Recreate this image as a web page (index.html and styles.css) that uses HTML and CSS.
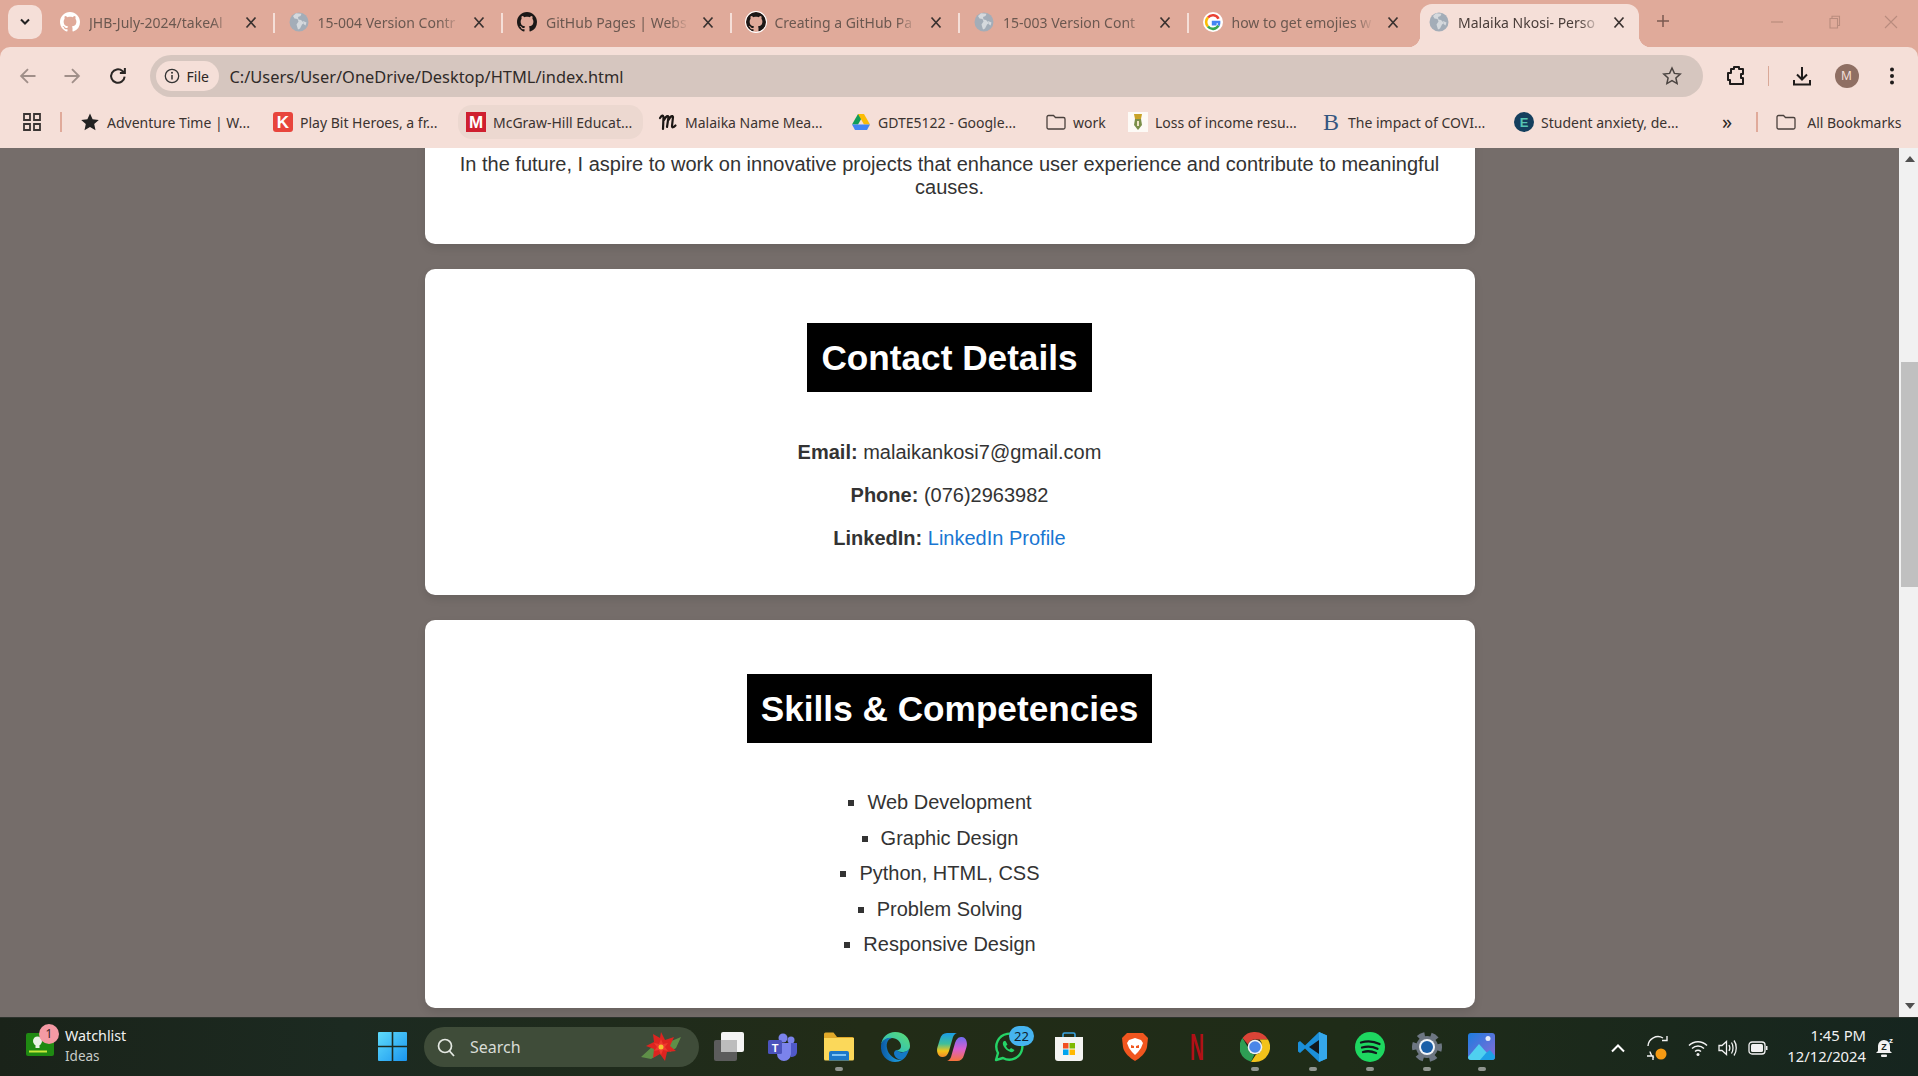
FILE: index.html
```html
<!DOCTYPE html>
<html lang="en">
<head>
    <meta charset="UTF-8">
    <title>Malaika Nkosi- Personal Portfolio</title>
    <link rel="stylesheet" href="styles.css">
</head>
<body>
    <svg class="defs" width="0" height="0">
        <symbol id="github" viewBox="0 0 16 16">
            <path fill="currentColor" d="M8 0C3.58 0 0 3.58 0 8c0 3.54 2.29 6.53 5.47 7.59.4.07.55-.17.55-.38 0-.19-.01-.82-.01-1.49-2.01.37-2.53-.49-2.69-.94-.09-.23-.48-.94-.82-1.13-.28-.15-.68-.52-.01-.53.63-.01 1.08.58 1.23.82.72 1.21 1.87.87 2.33.66.07-.52.28-.87.51-1.07-1.78-.2-3.64-.89-3.64-3.95 0-.87.31-1.59.82-2.15-.08-.2-.36-1.02.08-2.12 0 0 .67-.21 2.2.82.64-.18 1.32-.27 2-.27.68 0 1.36.09 2 .27 1.53-1.04 2.2-.82 2.2-.82.44 1.1.16 1.92.08 2.12.51.56.82 1.27.82 2.15 0 3.07-1.87 3.75-3.65 3.95.29.25.54.73.54 1.48 0 1.07-.01 1.93-.01 2.2 0 .21.15.46.55.38A8.013 8.013 0 0016 8c0-4.42-3.58-8-8-8z"/>
        </symbol>
        <symbol id="globe" viewBox="0 0 20 20">
            <circle cx="10" cy="10" r="9.5" fill="#a3adb8"/>
            <path fill="#d5d9dd" d="M7 1.2 4 4l1.5 2.5 3 .5 1 2.5-2 3 1.5 5 2-1 2-4 2-1.5-3-3-2.5-.5L9 5l2.5-1 1-2.2zM14 9l3.5 1.5-1 3-2-1.5z"/>
        </symbol>
        <symbol id="close" viewBox="0 0 12 12">
            <path d="M1.5 1 10.5 11M10.5 1 1.5 11" stroke="currentColor" stroke-width="1.7" fill="none"/>
        </symbol>
        <symbol id="folder" viewBox="0 0 20 16">
            <path d="M1 3a1.500 1.500 0 0 1 1.500-1.500h5L9.500 3.500h8A1.500 1.500 0 0 1 19 5v8.500a1.500 1.500 0 0 1-1.500 1.500h-15A1.500 1.500 0 0 1 1 13.500z" fill="none" stroke="#4a403c" stroke-width="1.300"/>
        </symbol>
    </svg>

    <header class="chrome">
        <div class="tabstrip">
            <button class="tab-menu">
                <svg width="12" height="8" viewBox="0 0 12 8"><path d="M2 1.500 6 5.500 10 1.500" fill="none" stroke="#222" stroke-width="2"/></svg>
            </button>
            <div class="tab sep">
                <svg class="fav fav-white"><use href="#github"/></svg>
                <span class="tab-title">JHB-July-2024/takeAl</span>
                <svg class="tab-close"><use href="#close"/></svg>
            </div>
            <div class="tab sep">
                <svg class="fav"><use href="#globe"/></svg>
                <span class="tab-title">15-004 Version Contr</span>
                <svg class="tab-close"><use href="#close"/></svg>
            </div>
            <div class="tab sep">
                <svg class="fav fav-dark"><use href="#github"/></svg>
                <span class="tab-title">GitHub Pages | Webs</span>
                <svg class="tab-close"><use href="#close"/></svg>
            </div>
            <div class="tab sep">
                <svg class="fav fav-dark fav-ring"><use href="#github"/></svg>
                <span class="tab-title">Creating a GitHub Pa</span>
                <svg class="tab-close"><use href="#close"/></svg>
            </div>
            <div class="tab sep">
                <svg class="fav"><use href="#globe"/></svg>
                <span class="tab-title">15-003 Version Cont</span>
                <svg class="tab-close"><use href="#close"/></svg>
            </div>
            <div class="tab">
                <svg class="fav" viewBox="0 0 20 20">
                    <circle cx="10" cy="10" r="10" fill="#fff"/>
                    <path d="M15.500 6.800A6.300 6.300 0 0 0 5 5.500" fill="none" stroke="#ea4335" stroke-width="2.600"/>
                    <path d="M5 5.500a6.300 6.300 0 0 0 0 9" fill="none" stroke="#fbbc05" stroke-width="2.600"/>
                    <path d="M5 14.500a6.300 6.300 0 0 0 10.500-1" fill="none" stroke="#34a853" stroke-width="2.600"/>
                    <path d="M15.500 13.500c.7-1.100.8-2.200.7-3.500H10v2.400h3.600" fill="none" stroke="#4285f4" stroke-width="2.400"/>
                </svg>
                <span class="tab-title">how to get emojies w</span>
                <svg class="tab-close"><use href="#close"/></svg>
            </div>
            <div class="tab tab-active">
                <svg class="fav"><use href="#globe"/></svg>
                <span class="tab-title">Malaika Nkosi- Perso</span>
                <svg class="tab-close"><use href="#close"/></svg>
            </div>
            <svg class="tab-new" width="16" height="16" viewBox="0 0 16 16"><path d="M8 2v12M2 8h12" stroke="#7a5a50" stroke-width="1.500"/></svg>
            <div class="win-controls">
                <svg width="14" height="14" viewBox="0 0 14 14"><path d="M1 7h12" stroke="#b98c7e" stroke-width="1.200"/></svg>
                <svg width="14" height="14" viewBox="0 0 14 14"><path d="M3 3.500h7.500v9.500H3zM5 3.500V1.200h7.500v9.300h-2" fill="none" stroke="#b98c7e" stroke-width="1.100"/></svg>
                <svg width="14" height="14" viewBox="0 0 14 14"><path d="M1 1l12 12M13 1 1 13" stroke="#b98c7e" stroke-width="1.100"/></svg>
            </div>
        </div>

        <div class="toolbar">
            <svg class="nav-btn" viewBox="0 0 16 16"><path d="M14 8H2.500M8 2.500 2.500 8 8 13.500" fill="none" stroke="#a08f89" stroke-width="1.500"/></svg>
            <svg class="nav-btn" viewBox="0 0 16 16"><path d="M2 8h11.500M8 2.500 13.500 8 8 13.500" fill="none" stroke="#a08f89" stroke-width="1.500"/></svg>
            <svg class="nav-btn" viewBox="0 0 16 16"><path d="M13.300 8.500A5.400 5.400 0 1 1 11.500 4L13.500 5.500M13.500 1.500v4h-4" fill="none" stroke="#2a2624" stroke-width="1.600"/></svg>
            <div class="omnibox">
                <div class="site-chip">
                    <svg width="16" height="16" viewBox="0 0 16 16"><circle cx="8" cy="8" r="6.700" fill="none" stroke="#333" stroke-width="1.300"/><path d="M8 7v4.500" stroke="#333" stroke-width="1.500"/><circle cx="8" cy="4.800" r="1" fill="#333"/></svg>
                    File
                </div>
                <span class="url">C:/Users/User/OneDrive/Desktop/HTML/index.html</span>
                <svg class="omni-star" width="20" height="20" viewBox="0 0 20 20"><path d="m10 2 2.400 5.400 5.800.6-4.300 3.900 1.200 5.700-5.100-2.900-5.100 2.900 1.200-5.700L1.800 8l5.800-.6z" fill="none" stroke="#4b4441" stroke-width="1.500"/></svg>
            </div>
            <div class="tool-group">
                <svg class="tool-ext" width="20" height="22" viewBox="0 0 20 22"><path d="M5 4h3V2h5v2h4v5h-2v4h2v6H4v-4H2V8h3z" fill="none" stroke="#1f1c1b" stroke-width="2" stroke-linejoin="round"/></svg>
                <i class="tool-sep"></i>
                <svg class="tool-dl" width="20" height="22" viewBox="0 0 20 22"><path d="M10 2v12M5 9.500l5 5 5-5M2 15v4.500h16V15" fill="none" stroke="#1f1c1b" stroke-width="2"/></svg>
                <span class="avatar">M</span>
                <svg class="tool-menu" width="6" height="20" viewBox="0 0 6 20"><circle cx="3" cy="3.500" r="2" fill="#1f1c1b"/><circle cx="3" cy="10" r="2" fill="#1f1c1b"/><circle cx="3" cy="16.500" r="2" fill="#1f1c1b"/></svg>
            </div>
        </div>

        <div class="bookmarks">
            <svg class="apps-grid" width="20" height="20" viewBox="0 0 20 20"><path d="M2 2h6v6H2zM12 2h6v6h-6zM2 12h6v6H2zM12 12h6v6h-6z" fill="none" stroke="#3a3533" stroke-width="1.800"/></svg>
            <i class="bm-sep"></i>
            <div class="bm-list">
                <div class="bm">
                    <svg width="20" height="20" viewBox="0 0 20 20"><path d="m10 1.500 2.600 5.700 6.200.7-4.600 4.200 1.300 6.100-5.500-3.100-5.500 3.100 1.300-6.100L1.200 7.900l6.200-.7z" fill="#222"/></svg>
                    <span>Adventure Time | W...</span>
                </div>
                <div class="bm">
                    <svg width="20" height="20" viewBox="0 0 20 20"><rect width="20" height="20" rx="3" fill="#e8453c"/><text x="10" y="16" text-anchor="middle" class="ico-k">K</text></svg>
                    <span>Play Bit Heroes, a fr...</span>
                </div>
                <div class="bm bm-hover">
                    <svg width="20" height="20" viewBox="0 0 20 20"><rect width="20" height="20" fill="#cf2030"/><text x="10" y="16" text-anchor="middle" class="ico-k">M</text></svg>
                    <span>McGraw-Hill Educat...</span>
                </div>
                <div class="bm">
                    <svg width="20" height="20" viewBox="0 0 20 20"><path d="M2 6c2-3 3-3 3.500-1L5 17M6 8c2-4 4-5 4.500-3L9 15M10.500 8c2-4 4-5 4.500-3l-1 9c0 2 1.500 1.500 3.500-.5" fill="none" stroke="#1c1715" stroke-width="2.200" stroke-linecap="round"/></svg>
                    <span>Malaika Name Mea...</span>
                </div>
                <div class="bm">
                    <svg width="20" height="18" viewBox="0 0 20 18"><path d="M7 1h6l-6 10.500H1z" fill="#0f9d58"/><path d="M13 1l6 10.500h-6L7 1z" fill="#fbbc05"/><path d="M1 11.500h18L16 17H4z" fill="#4285f4"/></svg>
                    <span>GDTE5122 - Google...</span>
                </div>
                <div class="bm">
                    <svg width="20" height="16"><use href="#folder"/></svg>
                    <span>work</span>
                </div>
                <div class="bm">
                    <svg width="20" height="20" viewBox="0 0 20 20"><rect width="20" height="20" fill="#fdfaf6"/><path d="M6 2h8l-1 5H7z" fill="#c9a227"/><path d="M7 7h6l1 6-4 5-4-5z" fill="#7b8f4a"/><path d="M9 9h2v5H9z" fill="#f2e6c8"/></svg>
                    <span>Loss of income resu...</span>
                </div>
                <div class="bm">
                    <svg class="ico-free" width="20" height="28" viewBox="0 0 20 28"><text x="10" y="22" text-anchor="middle" class="ico-b">B</text></svg>
                    <span>The impact of COVI...</span>
                </div>
                <div class="bm">
                    <svg width="20" height="20" viewBox="0 0 20 20"><circle cx="10" cy="10" r="10" fill="#143f5e"/><text x="10" y="14.500" text-anchor="middle" class="ico-e">E</text></svg>
                    <span>Student anxiety, de...</span>
                </div>
            </div>
            <span class="bm-more">»</span>
            <i class="bm-sep bm-sep-right"></i>
            <div class="bm-all">
                <svg width="20" height="16"><use href="#folder"/></svg>
                <span>All Bookmarks</span>
            </div>
        </div>
    </header>

    <div class="viewport">
        <main class="page">
            <section class="card card-cut">
                <p>In the future, I aspire to work on innovative projects that enhance user experience and contribute to meaningful causes.</p>
            </section>
            <section class="card">
                <h2>Contact Details</h2>
                <p><strong>Email:</strong> malaikankosi7@gmail.com</p>
                <p><strong>Phone:</strong> (076)2963982</p>
                <p><strong>LinkedIn:</strong> <a href="#">LinkedIn Profile</a></p>
            </section>
            <section class="card">
                <h2>Skills &amp; Competencies</h2>
                <ul>
                    <li>Web Development</li>
                    <li>Graphic Design</li>
                    <li>Python, HTML, CSS</li>
                    <li>Problem Solving</li>
                    <li>Responsive Design</li>
                </ul>
            </section>
        </main>
        <div class="scrollbar">
            <svg class="arrow" width="10" height="6" viewBox="0 0 10 6"><path d="M5 0l5 6H0z" fill="#505050"/></svg>
            <div class="track"><div class="thumb"></div></div>
            <svg class="arrow" width="10" height="6" viewBox="0 0 10 6"><path d="M5 6 0 0h10z" fill="#505050"/></svg>
        </div>
    </div>

    <footer class="taskbar">
        <div class="widget">
            <div class="widget-icon">
                <svg width="28" height="23" viewBox="0 0 28 23"><rect width="28" height="23" rx="2" fill="#1f8a12"/><circle cx="11.500" cy="8" r="4.500" fill="#e9f3e6"/><rect x="9.500" y="12" width="4" height="3" fill="#e9f3e6"/><rect x="3" y="17.500" width="18" height="2" fill="#c7e83a"/></svg>
                <span class="widget-badge">1</span>
            </div>
            <div class="widget-text">
                <span class="widget-title">Watchlist</span>
                <span class="widget-sub">Ideas</span>
            </div>
        </div>
        <svg class="win-logo" width="29" height="29" viewBox="0 0 29 29">
            <defs><linearGradient id="wing" x1="0" y1="0" x2="1" y2="1"><stop offset="0" stop-color="#5fdcfb"/><stop offset="1" stop-color="#1a95f0"/></linearGradient></defs>
            <path d="M1 0h12.700v13.700H0V1a1 1 0 0 1 1-1zM15.300 0H28a1 1 0 0 1 1 1v12.700H15.300zM0 15.300h13.700V29H1a1 1 0 0 1-1-1zM15.300 15.300H29V28a1 1 0 0 1-1 1H15.300z" fill="url(#wing)"/>
        </svg>
        <div class="search">
            <svg width="20" height="20" viewBox="0 0 20 20"><circle cx="9" cy="9" r="6.500" fill="none" stroke="#e4e8e2" stroke-width="1.700"/><path d="m13.500 14 4.500 5" stroke="#e4e8e2" stroke-width="1.800"/></svg>
            <span>Search</span>
            <svg class="flower" width="44" height="34" viewBox="0 0 44 34">
                <path d="M2 27 14 16l6 8-8 5zM42 7 30 12l1 10 6-4z" fill="#5f8f48"/>
                <path d="M22 2l4 8 9-3-4 9 6 5-9 1-2 9-5-7-7 4 1-9-8-3 8-4-1-8 7 4z" fill="#dd2420"/>
                <path d="M22 9l2 5 5-1-3 4 3 4-5-1-2 5-2-5-5 1 3-4-3-4 5 1z" fill="#f0392e"/>
                <circle cx="22" cy="17" r="2.500" fill="#f4c430"/>
            </svg>
        </div>
        <div class="apps">
            <div class="app">
                <svg viewBox="0 0 30 30"><rect x="0" y="8" width="23" height="21" rx="2" fill="#5c5c5c"/><rect x="7" y="0" width="23" height="20" rx="2" fill="#f4f4f4"/><rect x="7" y="8" width="16" height="12" fill="#bcbcbc"/></svg>
                <i></i>
            </div>
            <div class="app">
                <svg viewBox="0 0 30 30"><circle cx="23" cy="8" r="3.500" fill="#7b83eb"/><circle cx="15" cy="6" r="4.500" fill="#7b83eb"/><path d="M18 11h11v9a5 5 0 0 1-5 5h-1z" fill="#5059c9"/><path d="M8 11h15v11a7 7 0 0 1-14 0z" fill="#7b83eb"/><rect y="8" width="14" height="14" rx="1.500" fill="#4b53bc"/><text x="7" y="19.500" text-anchor="middle" class="ico-t">T</text></svg>
                <i></i>
            </div>
            <div class="app app-on">
                <svg viewBox="0 0 30 30"><path d="M0 2a1.500 1.500 0 0 1 1.500-1.500h8L13 5h15.500A1.500 1.500 0 0 1 30 6.500V12H0z" fill="#e0a92a"/><path d="M0 6h30v21a1.500 1.500 0 0 1-1.500 1.500h-27A1.500 1.500 0 0 1 0 27z" fill="#fbd85a"/><path d="M5 28.500V21a2 2 0 0 1 2-2h16a2 2 0 0 1 2 2v7.500z" fill="#1b78c9"/><rect x="8" y="22" width="14" height="2" fill="#7fc4f3"/></svg>
                <i></i>
            </div>
            <div class="app">
                <svg viewBox="0 0 30 30"><defs><linearGradient id="edge" x1="0" y1="0" x2="1" y2="0"><stop offset="0" stop-color="#0c59a4"/><stop offset="1" stop-color="#1ea7e8"/></linearGradient><linearGradient id="edge2" x1="0" y1="1" x2="1" y2="0"><stop offset="0" stop-color="#1fb3d6"/><stop offset="1" stop-color="#5fdf6f"/></linearGradient></defs><path d="M15 0C24 0 30 6 30 14c0 5-4 6-8 6-3 0-5-1-5-2 3 0 4-2 4-4 0-4-4-8-9-8C6 6 2 9 1 13 2 5 8 0 15 0z" fill="url(#edge2)"/><path d="M1 13C2 8 7 5 12 6c-4 1-6 5-5 10 1 7 9 13 15 12-2 1.300-4 2-7 2C7 30 0 23 1 13z" fill="url(#edge)"/><path d="M17 18c1 2 4 3 7 2 2-.5 4-1.500 5-3-1 6-5 10-7 11-4 0-8-3-8-7 0-1.500 1.500-3 3-3z" fill="#1479c6"/></svg>
                <i></i>
            </div>
            <div class="app">
                <svg viewBox="0 0 30 30"><defs><linearGradient id="cp1" x1="0" y1="0" x2="0" y2="1"><stop offset="0" stop-color="#1a9ce8"/><stop offset=".45" stop-color="#3fbf9a"/><stop offset=".75" stop-color="#f5c518"/><stop offset="1" stop-color="#f08a2a"/></linearGradient><linearGradient id="cp2" x1="0" y1="0" x2="0" y2="1"><stop offset="0" stop-color="#6f6cf0"/><stop offset=".5" stop-color="#d95fd0"/><stop offset="1" stop-color="#f7743a"/></linearGradient></defs><path d="M10 1h10c-2 .5-3 2-4 4L12 19c-1 3-3 6-6 6H5C1.500 25-1 20 .5 15L3 7C4 3 6.500 1 10 1z" fill="url(#cp1)"/><path d="M20 29H10c2-.5 3-2 4-4l4-14c1-3 3-6 6-6h1c3.500 0 6 5 4.500 10L27 23c-1 4-3.500 6-7 6z" fill="url(#cp2)"/></svg>
                <i></i>
            </div>
            <div class="app">
                <svg viewBox="0 0 30 30"><path d="M2 28l2-7A13 13 0 1 1 9 26z" fill="none" stroke="#25d366" stroke-width="2.400" stroke-linejoin="round"/><path d="M10 9c-1.500 1-1.500 3-.5 5 1.500 3 4 5 7 6 2 .5 3.500-.5 4-2l-3.500-2-1.500 1.500c-1.500-.5-3-2-3.500-3.500l1.500-1.500L11.500 9z" fill="#25d366"/></svg>
                <span class="app-badge">22</span>
                <i></i>
            </div>
            <div class="app">
                <svg viewBox="0 0 30 30"><path d="M9 6V2.500A1.500 1.500 0 0 1 10.500 1h9A1.500 1.500 0 0 1 21 2.500V6" fill="none" stroke="#3aa3e0" stroke-width="1.600"/><path d="M1 5h28v21a3 3 0 0 1-3 3H4a3 3 0 0 1-3-3z" fill="#f4f4f2"/><rect x="9" y="11" width="5.500" height="5.500" fill="#f25022"/><rect x="15.500" y="11" width="5.500" height="5.500" fill="#7fba00"/><rect x="9" y="17.500" width="5.500" height="5.500" fill="#00a4ef"/><rect x="15.500" y="17.500" width="5.500" height="5.500" fill="#ffb900"/></svg>
                <i></i>
            </div>
            <div class="app">
                <svg viewBox="0 0 30 30"><path d="M7 1h16l5 5-1 9c-1 6-7 11-12 14C10 26 4 21 3 15L2 6z" fill="#f1561f"/><path d="M9 8l6-2 6 2 2 3-2 5-3 4-3 3-3-3-3-4-2-5z" fill="#fff"/><path d="M11 13l3 1v2h-3zM19 13l-3 1v2h3z" fill="#f1561f"/></svg>
                <i></i>
            </div>
            <div class="app">
                <svg class="ico-free" viewBox="0 0 30 30"><text x="8" y="28" textLength="14" lengthAdjust="spacingAndGlyphs" class="ico-n">N</text></svg>
                <i></i>
            </div>
            <div class="app app-on">
                <svg viewBox="0 0 30 30"><path d="M15 0a15 15 0 0 1 13 7.500H15a7.500 7.500 0 0 0-7 5L2.500 6A15 15 0 0 1 15 0z" fill="#db4437"/><path d="M2.500 6 8 15.500a7.500 7.500 0 0 0 6.500 7L11 29.700A15 15 0 0 1 2.500 6z" fill="#2e9e54"/><path d="M28 7.500A15 15 0 0 1 15 30h-4l5-7.500A7.500 7.500 0 0 0 21.500 15a7.500 7.500 0 0 0-2-7.500z" fill="#f2c21a"/><circle cx="15" cy="15" r="7.300" fill="#f4f4f4"/><circle cx="15" cy="15" r="5.800" fill="#4a86e8"/></svg>
                <i></i>
            </div>
            <div class="app app-on">
                <svg viewBox="0 0 30 30"><path d="M21 0l8 3.500v23L21 30 7 16.500 2 21l-2-1.500V10.500L2 9l5 4.500z" fill="#1b8fd9"/><path d="M21 8 11 15l10 7z" fill="#12181c"/><path d="M21 0l8 3.500v23L21 30z" fill="#35a8ec"/></svg>
                <i></i>
            </div>
            <div class="app app-on">
                <svg viewBox="0 0 30 30"><circle cx="15" cy="15" r="15" fill="#1ed760"/><path d="M6 10.500c6-1.800 13-1.300 18.500 1.500M7 15.500c5-1.500 11-1 15.500 1.300M8 20c4-1.200 9-.8 13 1" fill="none" stroke="#12181c" stroke-width="2.300" stroke-linecap="round"/></svg>
                <i></i>
            </div>
            <div class="app app-on">
                <svg viewBox="0 0 30 30"><circle cx="15" cy="15" r="11" fill="#6d7682"/><circle cx="15" cy="15" r="12.500" fill="none" stroke="#6d7682" stroke-width="5" stroke-dasharray="7 6.090" transform="rotate(-14 15 15)"/><circle cx="15" cy="15" r="8" fill="#f1f4f8"/><circle cx="15" cy="15" r="6" fill="#1a5fa8"/></svg>
                <i></i>
            </div>
            <div class="app app-on">
                <svg viewBox="0 0 30 30"><defs><linearGradient id="ph" x1="0" y1="0" x2="1" y2="1"><stop offset="0" stop-color="#1c7de0"/><stop offset="1" stop-color="#8a6bd6"/></linearGradient></defs><rect x="1" y="1" width="27" height="27" rx="3" fill="url(#ph)"/><circle cx="21" cy="6.500" r="2.500" fill="#e7eefa"/><path d="M1 25 12 12l8 9-3 7H4a3 3 0 0 1-3-3z" fill="#4fd0f0"/><path d="M13 28l6-7 4-3 5 6v1a3 3 0 0 1-3 3z" fill="#1ea0e6"/></svg>
                <i></i>
            </div>
        </div>
        <div class="tray">
            <svg class="tray-chev" width="16" height="10" viewBox="0 0 16 10"><path d="M2 8.500l6-6 6 6" fill="none" stroke="#fff" stroke-width="2"/></svg>
            <svg class="tray-sync" width="28" height="26" viewBox="0 0 28 26"><path d="M3 11a10 10 0 0 1 15-8M22 1v4.500h-5M5 16.500a9 9 0 0 0 4 6M2 21h6v4" fill="none" stroke="#f2f2f2" stroke-width="1.400"/><circle cx="16" cy="19" r="5.500" fill="#f59a13"/></svg>
            <svg class="tray-wifi" width="20" height="18" viewBox="0 0 20 18"><path d="M1 6.500c5-5 13-5 18 0M4 9.500c3.500-3.200 8.500-3.200 12 0M7 12.500c1.800-1.500 4.200-1.500 6 0" fill="none" stroke="#f2f2f2" stroke-width="1.500"/><circle cx="10" cy="15.500" r="1.500" fill="#f2f2f2"/></svg>
            <svg class="tray-vol" width="20" height="18" viewBox="0 0 20 18"><path d="M1 6.500h3l4.500-4v13L4 11.500H1z" fill="none" stroke="#f2f2f2" stroke-width="1.300"/><path d="M11 6c1 1.700 1 4.300 0 6M13.500 3.500c2 3 2 8 0 11M16 1.500c3 4 3 11 0 15" fill="none" stroke="#f2f2f2" stroke-width="1.300"/></svg>
            <svg class="tray-batt" width="20" height="14" viewBox="0 0 20 14"><rect x="1" y="1" width="16" height="12" rx="3" fill="none" stroke="#f2f2f2" stroke-width="1.300"/><rect x="3" y="3" width="12" height="8" rx="1.500" fill="#f2f2f2"/><rect x="18" y="5" width="1.500" height="4" fill="#f2f2f2"/></svg>
            <div class="clock">
                <span>1:45 PM</span>
                <span>12/12/2024</span>
            </div>
            <svg class="tray-bell" width="20" height="22" viewBox="0 0 20 22"><path d="M9 3a6 6 0 0 1 6 6v5l2 2H1l2-2V9a6 6 0 0 1 6-6z" fill="#f2f2f2"/><rect x="6" y="17.500" width="6" height="2.500" rx="1" fill="#f2f2f2"/><text x="9" y="13" text-anchor="middle" class="ico-z">Z</text><text x="16" y="6" text-anchor="middle" class="ico-z2">z</text></svg>
        </div>
    </footer>
</body>
</html>
```

FILE: styles.css
```css
* {
    box-sizing: border-box;
}
html, body {
    height: 100%;
}
body {
    margin: 0;
    display: flex;
    flex-direction: column;
    overflow: hidden;
    background: #756d6a;
    font-family: "Liberation Sans", Arial, sans-serif;
}
.defs {
    display: block;
    height: 0;
}

/* browser frame */
.chrome {
    flex: none;
    font-family: "Noto Sans", "Open Sans", sans-serif;
    background: #e0aa9a;
    color: #3b3330;
}
.tabstrip {
    display: flex;
    align-items: flex-end;
    height: 47px;
}
.tab-menu {
    flex: none;
    margin: 0 4px 8px 8px;
    width: 34px;
    height: 34px;
    padding: 0;
    border: 0;
    border-radius: 10px;
    background: #f5dfd8;
    display: flex;
    align-items: center;
    justify-content: center;
}
.tab {
    flex: none;
    position: relative;
    display: flex;
    align-items: center;
    width: 228.5px;
    height: 43px;
    padding: 0 18px 7px 14px;
    font-size: 14px;
    color: #6b5850;
}
.tab.sep::after {
    content: "";
    position: absolute;
    right: 0;
    top: 9px;
    height: 20px;
    width: 2px;
    background: #f5dfd8;
}
.fav {
    flex: none;
    width: 20px;
    height: 20px;
    margin-right: 9px;
}
.fav-white {
    color: #fff;
}
.fav-dark {
    color: #1b1817;
}
.fav-ring {
    border-radius: 50%;
    box-shadow: 0 0 0 1px #fff;
}
.tab-title {
    flex: 1;
    min-width: 0;
    overflow: hidden;
    white-space: nowrap;
    -webkit-mask-image: linear-gradient(90deg, #000 86%, transparent 100%);
    mask-image: linear-gradient(90deg, #000 86%, transparent 100%);
}
.tab-close {
    flex: none;
    width: 12px;
    height: 13px;
    margin-left: 13px;
    color: #3a3230;
}
.tab-active {
    width: 219px;
    margin-left: 3px;
    padding: 0 14px 7px 9px;
    background: #f5dfd8;
    border-radius: 12px 12px 0 0;
    color: #4a3e3a;
}
.tab-active::before, .tab-active::after {
    content: "";
    position: absolute;
    bottom: 0;
    width: 12px;
    height: 12px;
}
.tab-active::before {
    left: -12px;
    background: radial-gradient(circle at 0 0, transparent 12px, #f5dfd8 12.5px);
}
.tab-active::after {
    right: -12px;
    background: radial-gradient(circle at 100% 0, transparent 12px, #f5dfd8 12.5px);
}
.tab-new {
    flex: none;
    margin: 0 0 18px 16px;
}
.win-controls {
    margin-left: auto;
    display: flex;
    gap: 43px;
    padding: 0 20px 18px 0;
}

.toolbar {
    display: flex;
    align-items: center;
    height: 51px;
    padding: 7px 15px 0 18px;
    background: #f5dfd8;
    border-radius: 10px 10px 0 0;
}
.nav-btn {
    flex: none;
    width: 20px;
    height: 20px;
    margin-right: 26px;
}
.nav-btn:first-child {
    margin-right: 23.500px;
}
.nav-btn:nth-child(3) {
    margin-right: 22px;
}
.omnibox {
    flex: none;
    width: 1553px;
    height: 42px;
    display: flex;
    align-items: center;
    padding: 0 6px;
    border-radius: 21px;
    background: #d6c6bf;
}
.site-chip {
    display: flex;
    align-items: center;
    gap: 7px;
    width: 63px;
    height: 30px;
    padding-left: 8px;
    border-radius: 15px;
    background: #f5dfd8;
    font-size: 14px;
    color: #2c2725;
}
.url {
    margin-left: 11px;
    font-size: 16.400px;
    color: #2f2a28;
}
.omni-star {
    margin-left: auto;
    margin-right: 15px;
}
.tool-group {
    flex: 1;
    display: flex;
    align-items: center;
}
.tool-ext {
    margin-left: 23px;
}
.tool-sep {
    width: 1px;
    height: 20px;
    margin-left: 22px;
    background: #d9a897;
}
.tool-dl {
    margin-left: 23px;
}
.avatar {
    width: 24px;
    height: 24px;
    margin-left: 23px;
    border-radius: 50%;
    background: #8f6f63;
    color: #f5dfd8;
    font-size: 12px;
    text-align: center;
    line-height: 24px;
}
.tool-menu {
    margin-left: 30px;
}

.bookmarks {
    isolation: isolate;
    display: flex;
    align-items: center;
    height: 50px;
    padding: 0 0 2px 22px;
    background: #f5dfd8;
    font-size: 14px;
    color: #3b3330;
}
.apps-grid {
    flex: none;
}
.bm-sep {
    flex: none;
    width: 2px;
    height: 20px;
    margin-left: 18px;
    background: #e0aa9a;
}
.bm-list {
    flex: none;
    display: grid;
    grid-template-columns: 193px 193px 192px 193px 195px 82px 193px 193px 190px;
    margin-left: 18px;
}
.bm {
    position: relative;
    display: flex;
    align-items: center;
    gap: 7px;
    height: 34px;
    white-space: nowrap;
}
.bm svg {
    flex: none;
}
.bm-hover::before {
    content: "";
    position: absolute;
    z-index: -1;
    left: -8px;
    top: 0;
    width: 185px;
    height: 34px;
    border-radius: 14px;
    background: #ecd8d0;
}
.bm-more {
    margin-left: 18px;
    font-size: 20px;
    line-height: 1;
    color: #2c2725;
}
.bm-sep-right {
    margin-left: 24px;
}
.bm-all {
    display: flex;
    align-items: center;
    gap: 11px;
    margin-left: 18px;
    white-space: nowrap;
}

/* page */
.viewport {
    flex: 1;
    min-height: 0;
    display: flex;
    overflow: hidden;
}
.page {
    flex: 1;
    min-width: 0;
}
.card {
    width: 1050px;
    margin: 0 auto 25px;
    padding: 30px 30px 25px;
    border-radius: 10px;
    background: #fff;
    box-shadow: 0 4px 8px rgba(0, 0, 0, .1);
    text-align: center;
    font-size: 20px;
    color: #333;
}
.card-cut {
    margin-top: -40px;
    padding-top: 45px;
}
.card p {
    margin: 0 0 20px;
}
.card h2 {
    display: inline-block;
    margin: 24px 0 49px;
    padding: 16px 14px;
    background: #000;
    color: #fff;
    font-size: 35.200px;
    line-height: 37px;
    vertical-align: top;
}
.card a {
    color: #1976d2;
    text-decoration: none;
}
.card ul {
    display: flex;
    flex-direction: column;
    align-items: center;
    margin: -1px 0 0;
    padding: 0 0 14.500px;
    list-style: square outside;
}
.card li {
    margin-bottom: 12.500px;
}

.scrollbar {
    flex: none;
    width: 19px;
    display: flex;
    flex-direction: column;
    align-items: center;
    background: #f1f1f1;
    padding: 8px 0;
}
.arrow {
    flex: none;
    margin-left: 2px;
}
.track {
    flex: 1;
    width: 100%;
    padding: 200px 0 0 2px;
}
.thumb {
    height: 225px;
    background: #c0c0c0;
}

/* windows taskbar */
.taskbar {
    flex: none;
    display: flex;
    align-items: flex-start;
    height: 59px;
    padding-top: 1px;
    background: linear-gradient(90deg, #1a2319 0, #1c2a21 18%, #222c17 45%, #1f2c18 70%, #16251f 100%);
    border-top: 1px solid #2c322c;
    font-family: "Noto Sans", "Open Sans", sans-serif;
    color: #f2f2f2;
}
.widget {
    flex: none;
    width: 378px;
    display: flex;
    padding: 4px 0 0 26px;
}
.widget-icon {
    position: relative;
    width: 39px;
    padding-top: 10px;
}
.widget-badge {
    position: absolute;
    left: 13px;
    top: 1px;
    width: 20px;
    height: 20px;
    border-radius: 50%;
    background: #f49aa4;
    color: #3a1f22;
    font-size: 12px;
    line-height: 20px;
    text-align: center;
}
.widget-text {
    display: flex;
    flex-direction: column;
    font-size: 14.300px;
    line-height: 21px;
    margin-top: 2px;
}
.widget-sub {
    color: #c8ccc8;
    font-size: 13.500px;
}
.win-logo {
    flex: none;
    margin-top: 13px;
}
.search {
    flex: none;
    width: 275px;
    height: 40px;
    margin: 8px 10px 0 17px;
    display: flex;
    align-items: center;
    gap: 14px;
    padding-left: 12px;
    border-radius: 20px;
    background: #3f4c39;
    font-size: 16px;
    color: #d8dcd6;
}
.flower {
    margin-left: auto;
    margin-right: 16px;
}
.apps {
    flex: none;
    display: grid;
    grid-template-columns: 54px 56px 56px 57px 57px 60px 66px 62px 58px 58px 57px 57px 55px 40px;
}
.app {
    position: relative;
    width: 40px;
    display: flex;
    flex-direction: column;
    align-items: center;
    padding-top: 13px;
}
.app svg {
    width: 30px;
    height: 30px;
}
.app i {
    width: 8px;
    height: 4px;
    margin-top: 5px;
    border-radius: 2px;
}
.app-on i {
    background: #8f948e;
}
.app-badge {
    position: absolute;
    left: 20px;
    top: 7px;
    width: 25px;
    height: 20px;
    border-radius: 11px;
    background: #46b4f0;
    color: #10222e;
    font-size: 13px;
    line-height: 20px;
    text-align: center;
}
.tray {
    margin-left: auto;
    flex: none;
    display: flex;
    align-items: center;
    height: 58px;
    padding-right: 23px;
}
.tray-sync {
    margin-left: 19px;
}
.tray-wifi {
    margin-left: 15px;
}
.tray-vol {
    margin-left: 10px;
}
.tray-batt {
    margin-left: 10px;
}
.clock {
    display: flex;
    flex-direction: column;
    align-items: flex-end;
    margin: -4px 0 0 19.500px;
    font-size: 14.800px;
    line-height: 21px;
}
.tray-bell {
    margin-left: 9px;
}

/* text inside icons */
.ico-free {
    overflow: visible;
}
.ico-k {
    font: bold 17px "Liberation Sans", sans-serif;
    fill: #fff;
}
.ico-b {
    font: 24px "Liberation Serif", serif;
    fill: #34567f;
}
.ico-e {
    font: bold 13px "Liberation Sans", sans-serif;
    fill: #56c6b4;
}
.ico-t {
    font: bold 11px "Liberation Sans", sans-serif;
    fill: #fff;
}
.ico-n {
    font: bold 36px "Liberation Sans", sans-serif;
    fill: #b20f16;
}
.ico-z {
    font: bold 9px "Liberation Sans", sans-serif;
    fill: #1a2520;
}
.ico-z2 {
    font: bold 8px "Liberation Sans", sans-serif;
    fill: #f2f2f2;
}
```
